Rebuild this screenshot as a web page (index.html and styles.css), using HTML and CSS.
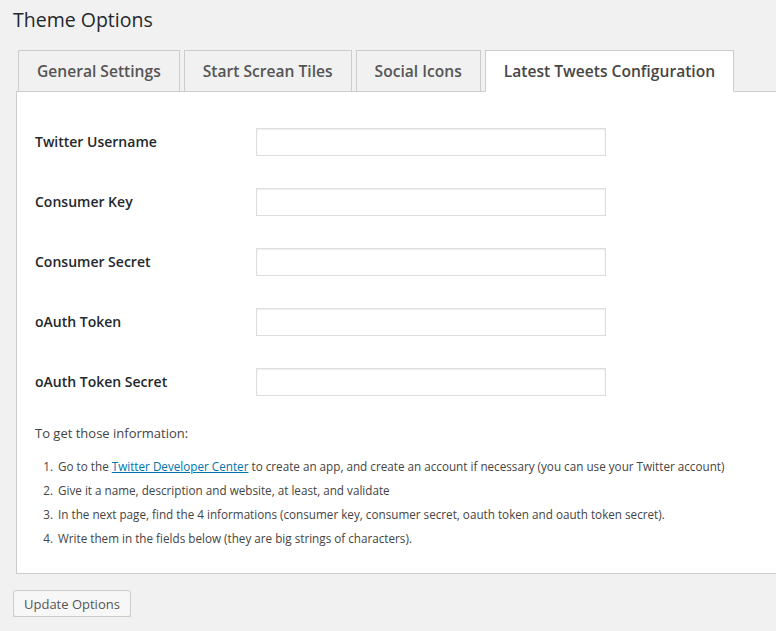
FILE: index.html
```html
<!DOCTYPE html>
<html>
<head>
<meta charset="utf-8">
<link rel="stylesheet" href="styles.css">
</head>
<body>
<div class="wrap">
  <h1 class="title">Theme Options</h1>
  <nav class="tabs">
    <a class="tab">General Settings</a>
    <a class="tab">Start Screan Tiles</a>
    <a class="tab">Social Icons</a>
    <a class="tab active">Latest Tweets Configuration</a>
  </nav>
  <div class="panel">
    <div class="row"><label class="lbl">Twitter Username</label><input class="field" type="text"></div>
    <div class="row"><label class="lbl">Consumer Key</label><input class="field" type="text"></div>
    <div class="row"><label class="lbl">Consumer Secret</label><input class="field" type="text"></div>
    <div class="row"><label class="lbl">oAuth Token</label><input class="field" type="text"></div>
    <div class="row"><label class="lbl">oAuth Token Secret</label><input class="field" type="text"></div>
    <p class="intro">To get those information:</p>
    <ol class="steps">
      <li>Go to the <a class="link" href="#">Twitter Developer Center</a> to create an app, and create an account if necessary (you can use your Twitter account)</li>
      <li>Give it a name, description and website, at least, and validate</li>
      <li>In the next page, find the 4 informations (consumer key, consumer secret, oauth token and oauth token secret).</li>
      <li>Write them in the fields below (they are big strings of characters).</li>
    </ol>
  </div>
  <button class="btn" type="button">Update Options</button>
</div>
</body>
</html>
```
FILE: styles.css
```css
html, body {
  margin: 0;
  padding: 0;
  background: #f1f1f1;
  overflow: hidden;
}
body {
  font-family: "Open Sans", "Liberation Sans", sans-serif;
  color: #444;
}
.wrap {
  padding: 0 0 0 13px;
  width: 800px;
}
.title {
  margin: 0;
  padding: 5px 0 0;
  font-size: 19.5px;
  font-weight: 400;
  line-height: 29px;
  color: #23282d;
}
.tabs {
  display: flex;
  gap: 4px;
  margin: 16px 0 0 5px;
  position: relative;
  z-index: 1;
}
.tab {
  display: block;
  box-sizing: border-box;
  height: 42px;
  padding: 0 18px;
  border: 1px solid #ccc;
  border-bottom: 1px solid #ccc;
  background: #f1f1f1;
  color: #555;
  font-size: 15.6px;
  font-weight: 600;
  line-height: 40px;
  text-decoration: none;
}
.tab.active {
  background: #fff;
  border-bottom-color: #fff;
  color: #464646;
}
.panel {
  margin: -1px 0 0 3px;
  background: #fff;
  border: 1px solid #ccc;
  padding: 36px 0 23px 18px;
}
.row {
  display: flex;
  align-items: center;
  height: 28px;
  margin-bottom: 32px;
}
.lbl {
  width: 221px;
  margin-top: -2px;
  font-size: 14px;
  font-weight: 600;
  color: #23282d;
}
.field {
  box-sizing: border-box;
  width: 350px;
  height: 28px;
  margin: 0;
  border: 1px solid #ddd;
  box-shadow: inset 0 1px 2px rgba(0,0,0,.07);
  background: #fff;
}
.intro {
  margin: -5px 0 0;
  font-size: 13px;
  line-height: 20px;
}
.steps {
  margin: 11px 0 0;
  padding-left: 21px;
  font-size: 11.7px;
  line-height: 24px;
}
.steps li {
  padding-left: 2px;
}
.link {
  color: #0073aa;
  text-decoration: underline;
}
.btn {
  margin: 16px 0 0;
  box-sizing: border-box;
  height: 27px;
  padding: 0 10px;
  border: 1px solid #ccc;
  border-radius: 3px;
  background: #f7f7f7;
  box-shadow: 0 1px 0 #ccc;
  color: #555;
  font-family: "Open Sans", "Liberation Sans", sans-serif;
  font-size: 13px;
}
```
